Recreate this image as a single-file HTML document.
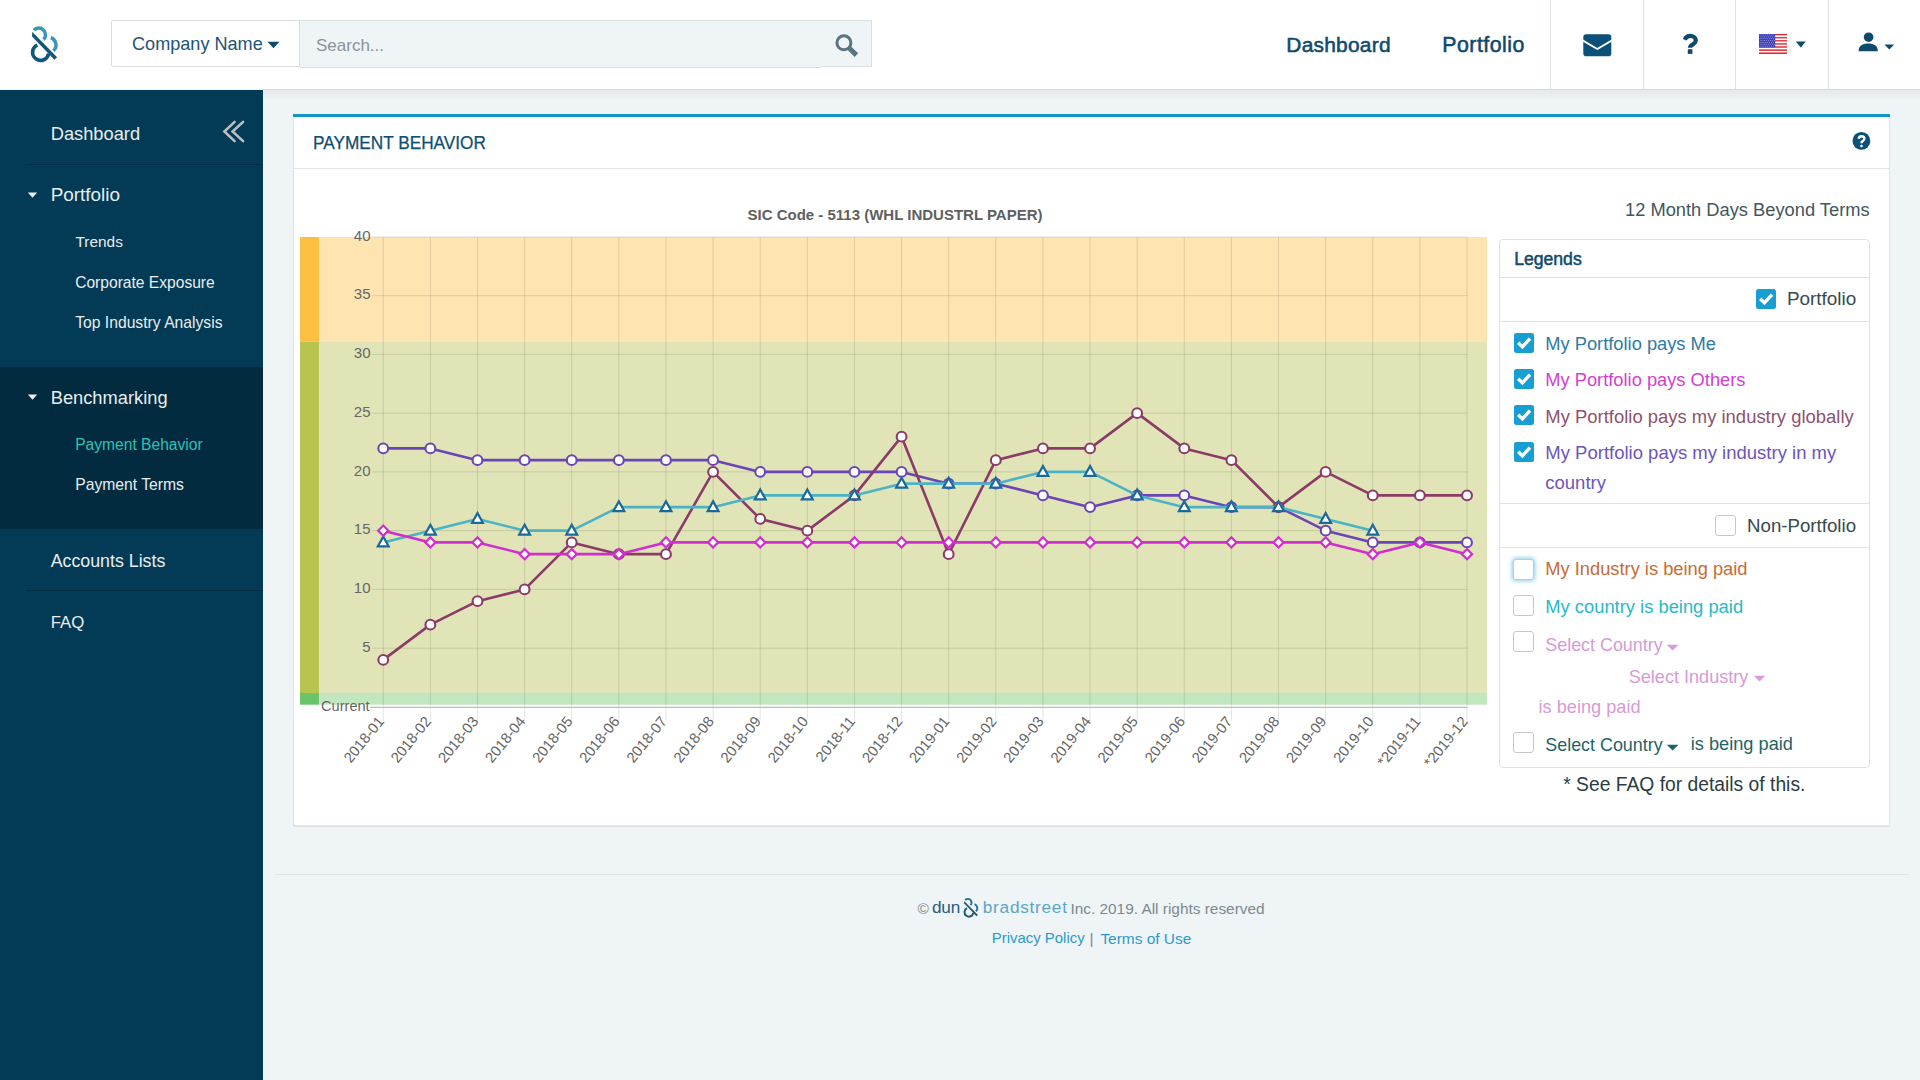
<!DOCTYPE html>
<html><head><meta charset="utf-8"><title>Payment Behavior</title>
<style>
html,body{margin:0;padding:0;width:1920px;height:1080px;overflow:hidden;background:#eff4f7}
body{position:relative;font-family:"Liberation Sans", sans-serif}
.t{position:absolute;line-height:1;white-space:nowrap}
svg text{font-family:"Liberation Sans", sans-serif}
</style></head><body>
<div style="position:absolute;left:0.00px;top:0.00px;width:1920.00px;height:1080.00px;background:#eff4f7"></div>
<div style="position:absolute;left:0.00px;top:0.00px;width:1920.00px;height:89.00px;background:#fff"></div>
<div style="position:absolute;left:263.00px;top:89.00px;width:1657.00px;height:1.00px;background:#d5dbdf"></div>
<div style="position:absolute;left:263.00px;top:90.00px;width:1657.00px;height:10.00px;background:linear-gradient(#e4e9ec,#eff4f7)"></div>
<svg style="position:absolute;left:0;top:0" width="80" height="80" viewBox="0 0 80 80">
<g transform="translate(25,20) scale(0.04444)">
<path d="M200 228 A148 148 0 1 1 418 440" fill="none" stroke="#3895bb" stroke-width="78"/>
<path d="M580 395 A175 175 0 0 1 640 690" fill="none" stroke="#3895bb" stroke-width="78"/>
<path d="M277 565 A180 180 0 1 0 530 752" fill="none" stroke="#0f577a" stroke-width="82"/>
<path d="M160 265 L722 838 L662 892 L160 372 Z" fill="#0f577a"/>
</g>
</svg>
<div style="position:absolute;left:111.00px;top:20.00px;width:189.00px;height:47.00px;background:#fff;border:1px solid #d9dde0;border-radius:2px 0 0 2px;box-sizing:border-box"></div>
<div class="t " style="left:132.00px;top:34.97px;font-size:18.10px;color:#1f5473;font-weight:400;">Company Name</div>
<svg style="position:absolute;left:267px;top:41px" width="14" height="8"><path d="M0.5 0.8 L12.5 0.8 L6.5 7.2 Z" fill="#0e4a6c"/></svg>
<div style="position:absolute;left:300.00px;top:20.00px;width:522.00px;height:48.00px;background:#eff4f7;border:1px solid #d9dfe3;border-left:none;border-right:none;box-sizing:border-box"></div>
<div style="position:absolute;left:822.00px;top:20.00px;width:50.00px;height:47.00px;background:#eff4f7;border:1px solid #d9dfe3;border-left:none;box-sizing:border-box"></div>
<div class="t " style="left:316.00px;top:36.91px;font-size:17.00px;color:#8b9399;font-weight:400;">Search...</div>
<svg style="position:absolute;left:830px;top:30px" width="32" height="32" viewBox="0 0 32 32">
<circle cx="13.9" cy="12.8" r="7.0" fill="none" stroke="#587580" stroke-width="3.0"/>
<path d="M18.9 17.8 L26.4 25.1" stroke="#587580" stroke-width="5"/>
</svg>
<div class="t " style="left:1286.30px;top:34.90px;font-size:20.90px;color:#0e4a6c;font-weight:400;letter-spacing:0.25px;-webkit-text-stroke:0.55px #0e4a6c">Dashboard</div>
<div class="t " style="left:1442.30px;top:34.57px;font-size:21.30px;color:#0e4a6c;font-weight:400;letter-spacing:0.5px;-webkit-text-stroke:0.55px #0e4a6c">Portfolio</div>
<div style="position:absolute;left:1550.00px;top:0.00px;width:1.00px;height:89.00px;background:#dde2e5"></div>
<div style="position:absolute;left:1643.00px;top:0.00px;width:1.00px;height:89.00px;background:#dde2e5"></div>
<div style="position:absolute;left:1735.00px;top:0.00px;width:1.00px;height:89.00px;background:#dde2e5"></div>
<div style="position:absolute;left:1828.00px;top:0.00px;width:1.00px;height:89.00px;background:#dde2e5"></div>
<svg style="position:absolute;left:1583px;top:34px" width="29" height="23" viewBox="0 0 29 23">
<rect x="0.3" y="0.2" width="28" height="22" rx="2.8" fill="#0b5079"/>
<path d="M-0.5 6.4 L14.3 15.0 L29.1 6.4" fill="none" stroke="#fff" stroke-width="2.0" stroke-linejoin="round"/>
</svg>
<svg style="position:absolute;left:0;top:0;overflow:visible" width="1" height="1">
<g transform="translate(1670,25) scale(0.037037)">
<path d="M398 398 C430 320 480 295 545 295 C630 295 695 345 695 415 C695 480 650 505 610 530 C560 560 540 580 540 612" fill="none" stroke="#0e4a6c" stroke-width="112"/>
<rect x="480" y="655" width="125" height="125" fill="#0e4a6c"/>
</g></svg>
<svg style="position:absolute;left:1759px;top:34px" width="28" height="20" viewBox="0 0 28 20"><rect x="0" y="0.000" width="28" height="1.538" fill="#e8202a"/><rect x="0" y="1.538" width="28" height="1.538" fill="#ffffff"/><rect x="0" y="3.077" width="28" height="1.538" fill="#e8202a"/><rect x="0" y="4.615" width="28" height="1.538" fill="#ffffff"/><rect x="0" y="6.154" width="28" height="1.538" fill="#e8202a"/><rect x="0" y="7.692" width="28" height="1.538" fill="#ffffff"/><rect x="0" y="9.231" width="28" height="1.538" fill="#e8202a"/><rect x="0" y="10.769" width="28" height="1.538" fill="#ffffff"/><rect x="0" y="12.308" width="28" height="1.538" fill="#e8202a"/><rect x="0" y="13.846" width="28" height="1.538" fill="#ffffff"/><rect x="0" y="15.385" width="28" height="1.538" fill="#e8202a"/><rect x="0" y="16.923" width="28" height="1.538" fill="#ffffff"/><rect x="0" y="18.462" width="28" height="1.538" fill="#e8202a"/><rect x="0" y="0" width="16.2" height="13.4" fill="#3c3cb4"/><rect x="0.6" y="0.6" width="0.9" height="0.9" fill="#a9a9e8"/><rect x="2.5" y="0.6" width="0.9" height="0.9" fill="#a9a9e8"/><rect x="4.4" y="0.6" width="0.9" height="0.9" fill="#a9a9e8"/><rect x="6.3" y="0.6" width="0.9" height="0.9" fill="#a9a9e8"/><rect x="8.2" y="0.6" width="0.9" height="0.9" fill="#a9a9e8"/><rect x="10.1" y="0.6" width="0.9" height="0.9" fill="#a9a9e8"/><rect x="12.0" y="0.6" width="0.9" height="0.9" fill="#a9a9e8"/><rect x="13.9" y="0.6" width="0.9" height="0.9" fill="#a9a9e8"/><rect x="1.5" y="2.5" width="0.9" height="0.9" fill="#a9a9e8"/><rect x="3.5" y="2.5" width="0.9" height="0.9" fill="#a9a9e8"/><rect x="5.3" y="2.5" width="0.9" height="0.9" fill="#a9a9e8"/><rect x="7.2" y="2.5" width="0.9" height="0.9" fill="#a9a9e8"/><rect x="9.1" y="2.5" width="0.9" height="0.9" fill="#a9a9e8"/><rect x="11.0" y="2.5" width="0.9" height="0.9" fill="#a9a9e8"/><rect x="12.9" y="2.5" width="0.9" height="0.9" fill="#a9a9e8"/><rect x="14.8" y="2.5" width="0.9" height="0.9" fill="#a9a9e8"/><rect x="0.6" y="4.3" width="0.9" height="0.9" fill="#a9a9e8"/><rect x="2.5" y="4.3" width="0.9" height="0.9" fill="#a9a9e8"/><rect x="4.4" y="4.3" width="0.9" height="0.9" fill="#a9a9e8"/><rect x="6.3" y="4.3" width="0.9" height="0.9" fill="#a9a9e8"/><rect x="8.2" y="4.3" width="0.9" height="0.9" fill="#a9a9e8"/><rect x="10.1" y="4.3" width="0.9" height="0.9" fill="#a9a9e8"/><rect x="12.0" y="4.3" width="0.9" height="0.9" fill="#a9a9e8"/><rect x="13.9" y="4.3" width="0.9" height="0.9" fill="#a9a9e8"/><rect x="1.5" y="6.2" width="0.9" height="0.9" fill="#a9a9e8"/><rect x="3.5" y="6.2" width="0.9" height="0.9" fill="#a9a9e8"/><rect x="5.3" y="6.2" width="0.9" height="0.9" fill="#a9a9e8"/><rect x="7.2" y="6.2" width="0.9" height="0.9" fill="#a9a9e8"/><rect x="9.1" y="6.2" width="0.9" height="0.9" fill="#a9a9e8"/><rect x="11.0" y="6.2" width="0.9" height="0.9" fill="#a9a9e8"/><rect x="12.9" y="6.2" width="0.9" height="0.9" fill="#a9a9e8"/><rect x="14.8" y="6.2" width="0.9" height="0.9" fill="#a9a9e8"/><rect x="0.6" y="8.0" width="0.9" height="0.9" fill="#a9a9e8"/><rect x="2.5" y="8.0" width="0.9" height="0.9" fill="#a9a9e8"/><rect x="4.4" y="8.0" width="0.9" height="0.9" fill="#a9a9e8"/><rect x="6.3" y="8.0" width="0.9" height="0.9" fill="#a9a9e8"/><rect x="8.2" y="8.0" width="0.9" height="0.9" fill="#a9a9e8"/><rect x="10.1" y="8.0" width="0.9" height="0.9" fill="#a9a9e8"/><rect x="12.0" y="8.0" width="0.9" height="0.9" fill="#a9a9e8"/><rect x="13.9" y="8.0" width="0.9" height="0.9" fill="#a9a9e8"/><rect x="1.5" y="9.8" width="0.9" height="0.9" fill="#a9a9e8"/><rect x="3.5" y="9.8" width="0.9" height="0.9" fill="#a9a9e8"/><rect x="5.3" y="9.8" width="0.9" height="0.9" fill="#a9a9e8"/><rect x="7.2" y="9.8" width="0.9" height="0.9" fill="#a9a9e8"/><rect x="9.1" y="9.8" width="0.9" height="0.9" fill="#a9a9e8"/><rect x="11.0" y="9.8" width="0.9" height="0.9" fill="#a9a9e8"/><rect x="12.9" y="9.8" width="0.9" height="0.9" fill="#a9a9e8"/><rect x="14.8" y="9.8" width="0.9" height="0.9" fill="#a9a9e8"/><rect x="0.6" y="11.7" width="0.9" height="0.9" fill="#a9a9e8"/><rect x="2.5" y="11.7" width="0.9" height="0.9" fill="#a9a9e8"/><rect x="4.4" y="11.7" width="0.9" height="0.9" fill="#a9a9e8"/><rect x="6.3" y="11.7" width="0.9" height="0.9" fill="#a9a9e8"/><rect x="8.2" y="11.7" width="0.9" height="0.9" fill="#a9a9e8"/><rect x="10.1" y="11.7" width="0.9" height="0.9" fill="#a9a9e8"/><rect x="12.0" y="11.7" width="0.9" height="0.9" fill="#a9a9e8"/><rect x="13.9" y="11.7" width="0.9" height="0.9" fill="#a9a9e8"/></svg>
<svg style="position:absolute;left:1795px;top:41px" width="12" height="7"><path d="M0.8 0.6 L10.8 0.6 L5.8 6.4 Z" fill="#0e4a6c"/></svg>
<svg style="position:absolute;left:1857px;top:31px" width="40" height="22" viewBox="0 0 40 22">
<circle cx="11.6" cy="6.2" r="4.8" fill="#0e4a6c"/>
<path d="M1.6 20.2 C1.6 14.2 5.6 12.4 11.2 12.4 C16.8 12.4 20.8 14.2 20.8 20.2 Z" fill="#0e4a6c"/>
<path d="M27.4 13.4 L37.2 13.4 L32.3 18.4 Z" fill="#0e4a6c"/>
</svg>
<div style="position:absolute;left:0.00px;top:90.00px;width:263.00px;height:990.00px;background:#033a55"></div>
<div style="position:absolute;left:0.00px;top:367.00px;width:263.00px;height:162.00px;background:#022b40"></div>
<div class="t " style="left:50.70px;top:124.51px;font-size:18.30px;color:#e8eef1;font-weight:400;">Dashboard</div>
<svg style="position:absolute;left:220px;top:118px" width="28" height="28" viewBox="0 0 28 28">
<path d="M14.6 3.9 L4.4 13.5 L14.6 23.1" fill="none" stroke="#b9bfc3" stroke-width="2.6" stroke-linecap="round"/>
<path d="M23.1 3.9 L12.6 13.5 L23.1 23.1" fill="none" stroke="#b9bfc3" stroke-width="2.6" stroke-linecap="round"/>
</svg>
<div style="position:absolute;left:25.00px;top:164.00px;width:238.00px;height:1.00px;background:#022c42"></div>
<svg style="position:absolute;left:27px;top:192px" width="12" height="7"><path d="M0.8 0.5 L10.2 0.5 L5.5 5.8 Z" fill="#e8eef1"/></svg>
<div class="t " style="left:50.70px;top:185.80px;font-size:18.90px;color:#e8eef1;font-weight:400;">Portfolio</div>
<div class="t " style="left:75.50px;top:233.66px;font-size:15.40px;color:#e8eef1;font-weight:400;">Trends</div>
<div class="t " style="left:75.20px;top:274.89px;font-size:15.60px;color:#e8eef1;font-weight:400;">Corporate Exposure</div>
<div class="t " style="left:75.20px;top:315.21px;font-size:15.70px;color:#e8eef1;font-weight:400;">Top Industry Analysis</div>
<svg style="position:absolute;left:27px;top:394px" width="12" height="7"><path d="M0.8 0.5 L10.2 0.5 L5.5 5.8 Z" fill="#e8eef1"/></svg>
<div class="t " style="left:50.70px;top:389.31px;font-size:18.30px;color:#e8eef1;font-weight:400;">Benchmarking</div>
<div class="t " style="left:75.20px;top:436.79px;font-size:15.60px;color:#2fc0b2;font-weight:400;">Payment Behavior</div>
<div class="t " style="left:75.20px;top:476.71px;font-size:15.70px;color:#e8eef1;font-weight:400;">Payment Terms</div>
<div class="t " style="left:50.70px;top:553.13px;font-size:17.80px;color:#e8eef1;font-weight:400;">Accounts Lists</div>
<div style="position:absolute;left:26.00px;top:590.00px;width:237.00px;height:1.00px;background:#022c42"></div>
<div class="t " style="left:50.70px;top:615.18px;font-size:16.80px;color:#e8eef1;font-weight:400;">FAQ</div>
<div style="position:absolute;left:293.00px;top:114.00px;width:1597.00px;height:712.00px;background:#fff;border:1px solid #dfe5e8;box-sizing:border-box;box-shadow:0 1px 1px rgba(0,0,0,0.06)"></div>
<div style="position:absolute;left:293.00px;top:114.00px;width:1597.00px;height:3.00px;background:#1196c7"></div>
<div style="position:absolute;left:294.00px;top:168.00px;width:1595.00px;height:1.00px;background:#e1e6e9"></div>
<div class="t " style="left:313.30px;top:133.67px;font-size:18.10px;color:#0f4e6f;font-weight:400;transform:scaleX(0.952);transform-origin:0 0;-webkit-text-stroke:0.25px #0f4e6f">PAYMENT BEHAVIOR</div>
<svg style="position:absolute;left:1851px;top:131px" width="20" height="20" viewBox="0 0 20 20">
<circle cx="10.4" cy="9.9" r="8.9" fill="#0b5079"/>
</svg>
<svg style="position:absolute;left:0;top:0;overflow:visible" width="1" height="1">
<g transform="translate(1845,125) scale(0.0324)">
<path d="M418 425 C432 372 467 348 508 348 C565 348 598 380 598 422 C598 462 570 480 542 497 C516 512 508 528 508 562" fill="none" stroke="#fff" stroke-width="74"/>
<circle cx="508" cy="648" r="42" fill="#fff"/>
</g></svg>
<div class="t " style="right:50.40px;top:201.11px;font-size:18.30px;color:#43565c;font-weight:400;">12 Month Days Beyond Terms</div>
<svg style="position:absolute;left:0;top:0" width="1920" height="1080" viewBox="0 0 1920 1080">
<rect x="300" y="237" width="19" height="104.75" fill="#fdbf42"/>
<rect x="319" y="237" width="1168" height="104.75" fill="#fde4b0"/>
<rect x="300" y="341.75" width="19" height="351.25" fill="#b9c450"/>
<rect x="319" y="341.75" width="1168" height="351.25" fill="#e0e4b6"/>
<rect x="300" y="693" width="19" height="11.7" fill="#6cc46a"/>
<rect x="319" y="693" width="1168" height="11.7" fill="#c2e6c0"/>
<path d="M372 648.15 H1467.5" stroke="rgba(0,0,0,0.11)" stroke-width="1"/>
<path d="M372 589.40 H1467.5" stroke="rgba(0,0,0,0.11)" stroke-width="1"/>
<path d="M372 530.65 H1467.5" stroke="rgba(0,0,0,0.11)" stroke-width="1"/>
<path d="M372 471.90 H1467.5" stroke="rgba(0,0,0,0.11)" stroke-width="1"/>
<path d="M372 413.15 H1467.5" stroke="rgba(0,0,0,0.11)" stroke-width="1"/>
<path d="M372 354.40 H1467.5" stroke="rgba(0,0,0,0.11)" stroke-width="1"/>
<path d="M372 295.65 H1467.5" stroke="rgba(0,0,0,0.11)" stroke-width="1"/>
<path d="M372 236.90 H1467.5" stroke="rgba(0,0,0,0.11)" stroke-width="1"/>
<path d="M383.25 237 V720.5" stroke="rgba(0,0,0,0.11)" stroke-width="1"/>
<path d="M430.37 237 V720.5" stroke="rgba(0,0,0,0.11)" stroke-width="1"/>
<path d="M477.49 237 V720.5" stroke="rgba(0,0,0,0.11)" stroke-width="1"/>
<path d="M524.61 237 V720.5" stroke="rgba(0,0,0,0.11)" stroke-width="1"/>
<path d="M571.73 237 V720.5" stroke="rgba(0,0,0,0.11)" stroke-width="1"/>
<path d="M618.85 237 V720.5" stroke="rgba(0,0,0,0.11)" stroke-width="1"/>
<path d="M665.97 237 V720.5" stroke="rgba(0,0,0,0.11)" stroke-width="1"/>
<path d="M713.09 237 V720.5" stroke="rgba(0,0,0,0.11)" stroke-width="1"/>
<path d="M760.21 237 V720.5" stroke="rgba(0,0,0,0.11)" stroke-width="1"/>
<path d="M807.33 237 V720.5" stroke="rgba(0,0,0,0.11)" stroke-width="1"/>
<path d="M854.45 237 V720.5" stroke="rgba(0,0,0,0.11)" stroke-width="1"/>
<path d="M901.57 237 V720.5" stroke="rgba(0,0,0,0.11)" stroke-width="1"/>
<path d="M948.69 237 V720.5" stroke="rgba(0,0,0,0.11)" stroke-width="1"/>
<path d="M995.81 237 V720.5" stroke="rgba(0,0,0,0.11)" stroke-width="1"/>
<path d="M1042.93 237 V720.5" stroke="rgba(0,0,0,0.11)" stroke-width="1"/>
<path d="M1090.05 237 V720.5" stroke="rgba(0,0,0,0.11)" stroke-width="1"/>
<path d="M1137.17 237 V720.5" stroke="rgba(0,0,0,0.11)" stroke-width="1"/>
<path d="M1184.29 237 V720.5" stroke="rgba(0,0,0,0.11)" stroke-width="1"/>
<path d="M1231.41 237 V720.5" stroke="rgba(0,0,0,0.11)" stroke-width="1"/>
<path d="M1278.53 237 V720.5" stroke="rgba(0,0,0,0.11)" stroke-width="1"/>
<path d="M1325.65 237 V720.5" stroke="rgba(0,0,0,0.11)" stroke-width="1"/>
<path d="M1372.77 237 V720.5" stroke="rgba(0,0,0,0.11)" stroke-width="1"/>
<path d="M1419.89 237 V720.5" stroke="rgba(0,0,0,0.11)" stroke-width="1"/>
<path d="M1467.01 237 V720.5" stroke="rgba(0,0,0,0.11)" stroke-width="1"/>
<path d="M370 707.4 H1467.5" stroke="#bbbbbb" stroke-width="1.2"/>
<text x="370.5" y="651.95" text-anchor="end" font-size="15" fill="#666">5</text>
<text x="370.5" y="593.20" text-anchor="end" font-size="15" fill="#666">10</text>
<text x="370.5" y="534.45" text-anchor="end" font-size="15" fill="#666">15</text>
<text x="370.5" y="475.70" text-anchor="end" font-size="15" fill="#666">20</text>
<text x="370.5" y="416.95" text-anchor="end" font-size="15" fill="#666">25</text>
<text x="370.5" y="358.20" text-anchor="end" font-size="15" fill="#666">30</text>
<text x="370.5" y="299.45" text-anchor="end" font-size="15" fill="#666">35</text>
<text x="370.5" y="240.70" text-anchor="end" font-size="15" fill="#666">40</text>
<text x="321" y="711.2" font-size="14.6" fill="#666">Current</text>
<text x="384.85" y="721.60" text-anchor="end" font-size="14.8" fill="#666" transform="rotate(-51 384.85 721.60)">2018-01</text>
<text x="431.97" y="721.60" text-anchor="end" font-size="14.8" fill="#666" transform="rotate(-51 431.97 721.60)">2018-02</text>
<text x="479.09" y="721.60" text-anchor="end" font-size="14.8" fill="#666" transform="rotate(-51 479.09 721.60)">2018-03</text>
<text x="526.21" y="721.60" text-anchor="end" font-size="14.8" fill="#666" transform="rotate(-51 526.21 721.60)">2018-04</text>
<text x="573.33" y="721.60" text-anchor="end" font-size="14.8" fill="#666" transform="rotate(-51 573.33 721.60)">2018-05</text>
<text x="620.45" y="721.60" text-anchor="end" font-size="14.8" fill="#666" transform="rotate(-51 620.45 721.60)">2018-06</text>
<text x="667.57" y="721.60" text-anchor="end" font-size="14.8" fill="#666" transform="rotate(-51 667.57 721.60)">2018-07</text>
<text x="714.69" y="721.60" text-anchor="end" font-size="14.8" fill="#666" transform="rotate(-51 714.69 721.60)">2018-08</text>
<text x="761.81" y="721.60" text-anchor="end" font-size="14.8" fill="#666" transform="rotate(-51 761.81 721.60)">2018-09</text>
<text x="808.93" y="721.60" text-anchor="end" font-size="14.8" fill="#666" transform="rotate(-51 808.93 721.60)">2018-10</text>
<text x="856.05" y="721.60" text-anchor="end" font-size="14.8" fill="#666" transform="rotate(-51 856.05 721.60)">2018-11</text>
<text x="903.17" y="721.60" text-anchor="end" font-size="14.8" fill="#666" transform="rotate(-51 903.17 721.60)">2018-12</text>
<text x="950.29" y="721.60" text-anchor="end" font-size="14.8" fill="#666" transform="rotate(-51 950.29 721.60)">2019-01</text>
<text x="997.41" y="721.60" text-anchor="end" font-size="14.8" fill="#666" transform="rotate(-51 997.41 721.60)">2019-02</text>
<text x="1044.53" y="721.60" text-anchor="end" font-size="14.8" fill="#666" transform="rotate(-51 1044.53 721.60)">2019-03</text>
<text x="1091.65" y="721.60" text-anchor="end" font-size="14.8" fill="#666" transform="rotate(-51 1091.65 721.60)">2019-04</text>
<text x="1138.77" y="721.60" text-anchor="end" font-size="14.8" fill="#666" transform="rotate(-51 1138.77 721.60)">2019-05</text>
<text x="1185.89" y="721.60" text-anchor="end" font-size="14.8" fill="#666" transform="rotate(-51 1185.89 721.60)">2019-06</text>
<text x="1233.01" y="721.60" text-anchor="end" font-size="14.8" fill="#666" transform="rotate(-51 1233.01 721.60)">2019-07</text>
<text x="1280.13" y="721.60" text-anchor="end" font-size="14.8" fill="#666" transform="rotate(-51 1280.13 721.60)">2019-08</text>
<text x="1327.25" y="721.60" text-anchor="end" font-size="14.8" fill="#666" transform="rotate(-51 1327.25 721.60)">2019-09</text>
<text x="1374.37" y="721.60" text-anchor="end" font-size="14.8" fill="#666" transform="rotate(-51 1374.37 721.60)">2019-10</text>
<text x="1421.49" y="721.60" text-anchor="end" font-size="14.8" fill="#666" transform="rotate(-51 1421.49 721.60)">*2019-11</text>
<text x="1468.61" y="721.60" text-anchor="end" font-size="14.8" fill="#666" transform="rotate(-51 1468.61 721.60)">*2019-12</text>
<text x="895" y="220" text-anchor="middle" font-size="15" font-weight="bold" fill="#606060">SIC Code - 5113 (WHL INDUSTRL PAPER)</text>
<polyline points="383.25,448.40 430.37,448.40 477.49,460.15 524.61,460.15 571.73,460.15 618.85,460.15 665.97,460.15 713.09,460.15 760.21,471.90 807.33,471.90 854.45,471.90 901.57,471.90 948.69,483.65 995.81,483.65 1042.93,495.40 1090.05,507.15 1137.17,495.40 1184.29,495.40 1231.41,507.15 1278.53,507.15 1325.65,530.65 1372.77,542.40 1419.89,542.40 1467.01,542.40" fill="none" stroke="#6b45b6" stroke-width="2.6" stroke-linejoin="round"/>
<circle cx="383.25" cy="448.40" r="4.9" fill="#fff" stroke="#6b45b6" stroke-width="2.1"/>
<circle cx="430.37" cy="448.40" r="4.9" fill="#fff" stroke="#6b45b6" stroke-width="2.1"/>
<circle cx="477.49" cy="460.15" r="4.9" fill="#fff" stroke="#6b45b6" stroke-width="2.1"/>
<circle cx="524.61" cy="460.15" r="4.9" fill="#fff" stroke="#6b45b6" stroke-width="2.1"/>
<circle cx="571.73" cy="460.15" r="4.9" fill="#fff" stroke="#6b45b6" stroke-width="2.1"/>
<circle cx="618.85" cy="460.15" r="4.9" fill="#fff" stroke="#6b45b6" stroke-width="2.1"/>
<circle cx="665.97" cy="460.15" r="4.9" fill="#fff" stroke="#6b45b6" stroke-width="2.1"/>
<circle cx="713.09" cy="460.15" r="4.9" fill="#fff" stroke="#6b45b6" stroke-width="2.1"/>
<circle cx="760.21" cy="471.90" r="4.9" fill="#fff" stroke="#6b45b6" stroke-width="2.1"/>
<circle cx="807.33" cy="471.90" r="4.9" fill="#fff" stroke="#6b45b6" stroke-width="2.1"/>
<circle cx="854.45" cy="471.90" r="4.9" fill="#fff" stroke="#6b45b6" stroke-width="2.1"/>
<circle cx="901.57" cy="471.90" r="4.9" fill="#fff" stroke="#6b45b6" stroke-width="2.1"/>
<circle cx="948.69" cy="483.65" r="4.9" fill="#fff" stroke="#6b45b6" stroke-width="2.1"/>
<circle cx="995.81" cy="483.65" r="4.9" fill="#fff" stroke="#6b45b6" stroke-width="2.1"/>
<circle cx="1042.93" cy="495.40" r="4.9" fill="#fff" stroke="#6b45b6" stroke-width="2.1"/>
<circle cx="1090.05" cy="507.15" r="4.9" fill="#fff" stroke="#6b45b6" stroke-width="2.1"/>
<circle cx="1137.17" cy="495.40" r="4.9" fill="#fff" stroke="#6b45b6" stroke-width="2.1"/>
<circle cx="1184.29" cy="495.40" r="4.9" fill="#fff" stroke="#6b45b6" stroke-width="2.1"/>
<circle cx="1231.41" cy="507.15" r="4.9" fill="#fff" stroke="#6b45b6" stroke-width="2.1"/>
<circle cx="1278.53" cy="507.15" r="4.9" fill="#fff" stroke="#6b45b6" stroke-width="2.1"/>
<circle cx="1325.65" cy="530.65" r="4.9" fill="#fff" stroke="#6b45b6" stroke-width="2.1"/>
<circle cx="1372.77" cy="542.40" r="4.9" fill="#fff" stroke="#6b45b6" stroke-width="2.1"/>
<circle cx="1419.89" cy="542.40" r="4.9" fill="#fff" stroke="#6b45b6" stroke-width="2.1"/>
<circle cx="1467.01" cy="542.40" r="4.9" fill="#fff" stroke="#6b45b6" stroke-width="2.1"/>
<polyline points="383.25,659.90 430.37,624.65 477.49,601.15 524.61,589.40 571.73,542.40 618.85,554.15 665.97,554.15 713.09,471.90 760.21,518.90 807.33,530.65 854.45,495.40 901.57,436.65 948.69,554.15 995.81,460.15 1042.93,448.40 1090.05,448.40 1137.17,413.15 1184.29,448.40 1231.41,460.15 1278.53,507.15 1325.65,471.90 1372.77,495.40 1419.89,495.40 1467.01,495.40" fill="none" stroke="#8a3b68" stroke-width="2.6" stroke-linejoin="round"/>
<circle cx="383.25" cy="659.90" r="4.9" fill="#fff" stroke="#8a3b68" stroke-width="2.1"/>
<circle cx="430.37" cy="624.65" r="4.9" fill="#fff" stroke="#8a3b68" stroke-width="2.1"/>
<circle cx="477.49" cy="601.15" r="4.9" fill="#fff" stroke="#8a3b68" stroke-width="2.1"/>
<circle cx="524.61" cy="589.40" r="4.9" fill="#fff" stroke="#8a3b68" stroke-width="2.1"/>
<circle cx="571.73" cy="542.40" r="4.9" fill="#fff" stroke="#8a3b68" stroke-width="2.1"/>
<circle cx="618.85" cy="554.15" r="4.9" fill="#fff" stroke="#8a3b68" stroke-width="2.1"/>
<circle cx="665.97" cy="554.15" r="4.9" fill="#fff" stroke="#8a3b68" stroke-width="2.1"/>
<circle cx="713.09" cy="471.90" r="4.9" fill="#fff" stroke="#8a3b68" stroke-width="2.1"/>
<circle cx="760.21" cy="518.90" r="4.9" fill="#fff" stroke="#8a3b68" stroke-width="2.1"/>
<circle cx="807.33" cy="530.65" r="4.9" fill="#fff" stroke="#8a3b68" stroke-width="2.1"/>
<circle cx="854.45" cy="495.40" r="4.9" fill="#fff" stroke="#8a3b68" stroke-width="2.1"/>
<circle cx="901.57" cy="436.65" r="4.9" fill="#fff" stroke="#8a3b68" stroke-width="2.1"/>
<circle cx="948.69" cy="554.15" r="4.9" fill="#fff" stroke="#8a3b68" stroke-width="2.1"/>
<circle cx="995.81" cy="460.15" r="4.9" fill="#fff" stroke="#8a3b68" stroke-width="2.1"/>
<circle cx="1042.93" cy="448.40" r="4.9" fill="#fff" stroke="#8a3b68" stroke-width="2.1"/>
<circle cx="1090.05" cy="448.40" r="4.9" fill="#fff" stroke="#8a3b68" stroke-width="2.1"/>
<circle cx="1137.17" cy="413.15" r="4.9" fill="#fff" stroke="#8a3b68" stroke-width="2.1"/>
<circle cx="1184.29" cy="448.40" r="4.9" fill="#fff" stroke="#8a3b68" stroke-width="2.1"/>
<circle cx="1231.41" cy="460.15" r="4.9" fill="#fff" stroke="#8a3b68" stroke-width="2.1"/>
<circle cx="1278.53" cy="507.15" r="4.9" fill="#fff" stroke="#8a3b68" stroke-width="2.1"/>
<circle cx="1325.65" cy="471.90" r="4.9" fill="#fff" stroke="#8a3b68" stroke-width="2.1"/>
<circle cx="1372.77" cy="495.40" r="4.9" fill="#fff" stroke="#8a3b68" stroke-width="2.1"/>
<circle cx="1419.89" cy="495.40" r="4.9" fill="#fff" stroke="#8a3b68" stroke-width="2.1"/>
<circle cx="1467.01" cy="495.40" r="4.9" fill="#fff" stroke="#8a3b68" stroke-width="2.1"/>
<polyline points="383.25,542.40 430.37,530.65 477.49,518.90 524.61,530.65 571.73,530.65 618.85,507.15 665.97,507.15 713.09,507.15 760.21,495.40 807.33,495.40 854.45,495.40 901.57,483.65 948.69,483.65 995.81,483.65 1042.93,471.90 1090.05,471.90 1137.17,495.40 1184.29,507.15 1231.41,507.15 1278.53,507.15 1325.65,518.90 1372.77,530.65" fill="none" stroke="#4cb2c6" stroke-width="2.6" stroke-linejoin="round"/>
<path d="M383.25 536.60 L388.65 546.30 L377.85 546.30 Z" fill="#fff" stroke="#19699a" stroke-width="2.2" stroke-linejoin="miter"/>
<path d="M430.37 524.85 L435.77 534.55 L424.97 534.55 Z" fill="#fff" stroke="#19699a" stroke-width="2.2" stroke-linejoin="miter"/>
<path d="M477.49 513.10 L482.89 522.80 L472.09 522.80 Z" fill="#fff" stroke="#19699a" stroke-width="2.2" stroke-linejoin="miter"/>
<path d="M524.61 524.85 L530.01 534.55 L519.21 534.55 Z" fill="#fff" stroke="#19699a" stroke-width="2.2" stroke-linejoin="miter"/>
<path d="M571.73 524.85 L577.13 534.55 L566.33 534.55 Z" fill="#fff" stroke="#19699a" stroke-width="2.2" stroke-linejoin="miter"/>
<path d="M618.85 501.35 L624.25 511.05 L613.45 511.05 Z" fill="#fff" stroke="#19699a" stroke-width="2.2" stroke-linejoin="miter"/>
<path d="M665.97 501.35 L671.37 511.05 L660.57 511.05 Z" fill="#fff" stroke="#19699a" stroke-width="2.2" stroke-linejoin="miter"/>
<path d="M713.09 501.35 L718.49 511.05 L707.69 511.05 Z" fill="#fff" stroke="#19699a" stroke-width="2.2" stroke-linejoin="miter"/>
<path d="M760.21 489.60 L765.61 499.30 L754.81 499.30 Z" fill="#fff" stroke="#19699a" stroke-width="2.2" stroke-linejoin="miter"/>
<path d="M807.33 489.60 L812.73 499.30 L801.93 499.30 Z" fill="#fff" stroke="#19699a" stroke-width="2.2" stroke-linejoin="miter"/>
<path d="M854.45 489.60 L859.85 499.30 L849.05 499.30 Z" fill="#fff" stroke="#19699a" stroke-width="2.2" stroke-linejoin="miter"/>
<path d="M901.57 477.85 L906.97 487.55 L896.17 487.55 Z" fill="#fff" stroke="#19699a" stroke-width="2.2" stroke-linejoin="miter"/>
<path d="M948.69 477.85 L954.09 487.55 L943.29 487.55 Z" fill="#fff" stroke="#19699a" stroke-width="2.2" stroke-linejoin="miter"/>
<path d="M995.81 477.85 L1001.21 487.55 L990.41 487.55 Z" fill="#fff" stroke="#19699a" stroke-width="2.2" stroke-linejoin="miter"/>
<path d="M1042.93 466.10 L1048.33 475.80 L1037.53 475.80 Z" fill="#fff" stroke="#19699a" stroke-width="2.2" stroke-linejoin="miter"/>
<path d="M1090.05 466.10 L1095.45 475.80 L1084.65 475.80 Z" fill="#fff" stroke="#19699a" stroke-width="2.2" stroke-linejoin="miter"/>
<path d="M1137.17 489.60 L1142.57 499.30 L1131.77 499.30 Z" fill="#fff" stroke="#19699a" stroke-width="2.2" stroke-linejoin="miter"/>
<path d="M1184.29 501.35 L1189.69 511.05 L1178.89 511.05 Z" fill="#fff" stroke="#19699a" stroke-width="2.2" stroke-linejoin="miter"/>
<path d="M1231.41 501.35 L1236.81 511.05 L1226.01 511.05 Z" fill="#fff" stroke="#19699a" stroke-width="2.2" stroke-linejoin="miter"/>
<path d="M1278.53 501.35 L1283.93 511.05 L1273.13 511.05 Z" fill="#fff" stroke="#19699a" stroke-width="2.2" stroke-linejoin="miter"/>
<path d="M1325.65 513.10 L1331.05 522.80 L1320.25 522.80 Z" fill="#fff" stroke="#19699a" stroke-width="2.2" stroke-linejoin="miter"/>
<path d="M1372.77 524.85 L1378.17 534.55 L1367.37 534.55 Z" fill="#fff" stroke="#19699a" stroke-width="2.2" stroke-linejoin="miter"/>
<polyline points="383.25,530.65 430.37,542.40 477.49,542.40 524.61,554.15 571.73,554.15 618.85,554.15 665.97,542.40 713.09,542.40 760.21,542.40 807.33,542.40 854.45,542.40 901.57,542.40 948.69,542.40 995.81,542.40 1042.93,542.40 1090.05,542.40 1137.17,542.40 1184.29,542.40 1231.41,542.40 1278.53,542.40 1325.65,542.40 1372.77,554.15 1419.89,542.40 1467.01,554.15" fill="none" stroke="#d22dce" stroke-width="2.6" stroke-linejoin="round"/>
<path d="M383.25 525.55 L388.35 530.65 L383.25 535.75 L378.15 530.65 Z" fill="#fff" stroke="#d22dce" stroke-width="2.2"/>
<path d="M430.37 537.30 L435.47 542.40 L430.37 547.50 L425.27 542.40 Z" fill="#fff" stroke="#d22dce" stroke-width="2.2"/>
<path d="M477.49 537.30 L482.59 542.40 L477.49 547.50 L472.39 542.40 Z" fill="#fff" stroke="#d22dce" stroke-width="2.2"/>
<path d="M524.61 549.05 L529.71 554.15 L524.61 559.25 L519.51 554.15 Z" fill="#fff" stroke="#d22dce" stroke-width="2.2"/>
<path d="M571.73 549.05 L576.83 554.15 L571.73 559.25 L566.63 554.15 Z" fill="#fff" stroke="#d22dce" stroke-width="2.2"/>
<path d="M618.85 549.05 L623.95 554.15 L618.85 559.25 L613.75 554.15 Z" fill="#fff" stroke="#d22dce" stroke-width="2.2"/>
<path d="M665.97 537.30 L671.07 542.40 L665.97 547.50 L660.87 542.40 Z" fill="#fff" stroke="#d22dce" stroke-width="2.2"/>
<path d="M713.09 537.30 L718.19 542.40 L713.09 547.50 L707.99 542.40 Z" fill="#fff" stroke="#d22dce" stroke-width="2.2"/>
<path d="M760.21 537.30 L765.31 542.40 L760.21 547.50 L755.11 542.40 Z" fill="#fff" stroke="#d22dce" stroke-width="2.2"/>
<path d="M807.33 537.30 L812.43 542.40 L807.33 547.50 L802.23 542.40 Z" fill="#fff" stroke="#d22dce" stroke-width="2.2"/>
<path d="M854.45 537.30 L859.55 542.40 L854.45 547.50 L849.35 542.40 Z" fill="#fff" stroke="#d22dce" stroke-width="2.2"/>
<path d="M901.57 537.30 L906.67 542.40 L901.57 547.50 L896.47 542.40 Z" fill="#fff" stroke="#d22dce" stroke-width="2.2"/>
<path d="M948.69 537.30 L953.79 542.40 L948.69 547.50 L943.59 542.40 Z" fill="#fff" stroke="#d22dce" stroke-width="2.2"/>
<path d="M995.81 537.30 L1000.91 542.40 L995.81 547.50 L990.71 542.40 Z" fill="#fff" stroke="#d22dce" stroke-width="2.2"/>
<path d="M1042.93 537.30 L1048.03 542.40 L1042.93 547.50 L1037.83 542.40 Z" fill="#fff" stroke="#d22dce" stroke-width="2.2"/>
<path d="M1090.05 537.30 L1095.15 542.40 L1090.05 547.50 L1084.95 542.40 Z" fill="#fff" stroke="#d22dce" stroke-width="2.2"/>
<path d="M1137.17 537.30 L1142.27 542.40 L1137.17 547.50 L1132.07 542.40 Z" fill="#fff" stroke="#d22dce" stroke-width="2.2"/>
<path d="M1184.29 537.30 L1189.39 542.40 L1184.29 547.50 L1179.19 542.40 Z" fill="#fff" stroke="#d22dce" stroke-width="2.2"/>
<path d="M1231.41 537.30 L1236.51 542.40 L1231.41 547.50 L1226.31 542.40 Z" fill="#fff" stroke="#d22dce" stroke-width="2.2"/>
<path d="M1278.53 537.30 L1283.63 542.40 L1278.53 547.50 L1273.43 542.40 Z" fill="#fff" stroke="#d22dce" stroke-width="2.2"/>
<path d="M1325.65 537.30 L1330.75 542.40 L1325.65 547.50 L1320.55 542.40 Z" fill="#fff" stroke="#d22dce" stroke-width="2.2"/>
<path d="M1372.77 549.05 L1377.87 554.15 L1372.77 559.25 L1367.67 554.15 Z" fill="#fff" stroke="#d22dce" stroke-width="2.2"/>
<path d="M1419.89 537.30 L1424.99 542.40 L1419.89 547.50 L1414.79 542.40 Z" fill="#fff" stroke="#d22dce" stroke-width="2.2"/>
<path d="M1467.01 549.05 L1472.11 554.15 L1467.01 559.25 L1461.91 554.15 Z" fill="#fff" stroke="#d22dce" stroke-width="2.2"/>
</svg>
<div style="position:absolute;left:1499.00px;top:239.00px;width:371.00px;height:529.00px;border:1px solid #dfe3e6;border-radius:4px;box-sizing:border-box;background:#fff"></div>
<div class="t " style="left:1514.20px;top:250.50px;font-size:17.60px;color:#0e4a6c;font-weight:400;-webkit-text-stroke:0.5px #0e4a6c">Legends</div>
<div style="position:absolute;left:1500.00px;top:277.00px;width:369.00px;height:1.00px;background:#dfe3e6"></div>
<div style="position:absolute;left:1500.00px;top:321.00px;width:369.00px;height:1.00px;background:#dfe3e6"></div>
<div style="position:absolute;left:1500.00px;top:503.00px;width:369.00px;height:1.00px;background:#dfe3e6"></div>
<div style="position:absolute;left:1500.00px;top:547.00px;width:369.00px;height:1.00px;background:#dfe3e6"></div>
<svg style="position:absolute;left:1755.6px;top:288.6px" width="20" height="20" viewBox="0 0 20 20">
<rect x="0" y="0" width="20" height="20" rx="2.5" fill="#179ed3"/>
<path d="M4.2 9.8 L8.4 13.8 L16 5.6" fill="none" stroke="#fff" stroke-width="3.4"/>
</svg>
<div class="t " style="left:1786.90px;top:289.80px;font-size:18.90px;color:#374a50;font-weight:400;">Portfolio</div>
<svg style="position:absolute;left:1513.5px;top:332.7px" width="20" height="20" viewBox="0 0 20 20">
<rect x="0" y="0" width="20" height="20" rx="2.5" fill="#179ed3"/>
<path d="M4.2 9.8 L8.4 13.8 L16 5.6" fill="none" stroke="#fff" stroke-width="3.4"/>
</svg>
<div class="t " style="left:1545.30px;top:334.51px;font-size:18.30px;color:#2f7aa3;font-weight:400;">My Portfolio pays Me</div>
<svg style="position:absolute;left:1513.5px;top:369.0px" width="20" height="20" viewBox="0 0 20 20">
<rect x="0" y="0" width="20" height="20" rx="2.5" fill="#179ed3"/>
<path d="M4.2 9.8 L8.4 13.8 L16 5.6" fill="none" stroke="#fff" stroke-width="3.4"/>
</svg>
<div class="t " style="left:1545.30px;top:371.11px;font-size:18.30px;color:#d23fcf;font-weight:400;">My Portfolio pays Others</div>
<svg style="position:absolute;left:1513.5px;top:405.0px" width="20" height="20" viewBox="0 0 20 20">
<rect x="0" y="0" width="20" height="20" rx="2.5" fill="#179ed3"/>
<path d="M4.2 9.8 L8.4 13.8 L16 5.6" fill="none" stroke="#fff" stroke-width="3.4"/>
</svg>
<div class="t " style="left:1545.30px;top:407.88px;font-size:18.45px;color:#8e5270;font-weight:400;">My Portfolio pays my industry globally</div>
<svg style="position:absolute;left:1513.5px;top:441.5px" width="20" height="20" viewBox="0 0 20 20">
<rect x="0" y="0" width="20" height="20" rx="2.5" fill="#179ed3"/>
<path d="M4.2 9.8 L8.4 13.8 L16 5.6" fill="none" stroke="#fff" stroke-width="3.4"/>
</svg>
<div class="t " style="left:1545.30px;top:443.64px;font-size:18.50px;color:#6c55bc;font-weight:400;">My Portfolio pays my industry in my</div>
<div class="t " style="left:1545.30px;top:474.14px;font-size:18.50px;color:#6c55bc;font-weight:400;">country</div>
<div style="position:absolute;left:1715.00px;top:514.50px;width:21.00px;height:21.00px;background:#fff;border:1px solid #c6c9cc;border-radius:3px;box-sizing:border-box;"></div>
<div class="t " style="left:1747.00px;top:517.27px;font-size:18.70px;color:#374a50;font-weight:400;">Non-Portfolio</div>
<div style="position:absolute;left:1513.00px;top:558.50px;width:21.00px;height:21.00px;background:#fff;border:1px solid #c6c9cc;border-radius:3px;box-sizing:border-box;box-shadow:0 0 4px 1px rgba(60,170,220,0.6);"></div>
<div class="t " style="left:1545.30px;top:560.41px;font-size:18.30px;color:#c56d35;font-weight:400;">My Industry is being paid</div>
<div style="position:absolute;left:1513.00px;top:594.50px;width:21.00px;height:21.00px;background:#fff;border:1px solid #c6c9cc;border-radius:3px;box-sizing:border-box;"></div>
<div class="t " style="left:1545.30px;top:598.06px;font-size:18.35px;color:#2ab8c8;font-weight:400;">My country is being paid</div>
<div style="position:absolute;left:1513.00px;top:631.00px;width:21.00px;height:21.00px;background:#fff;border:1px solid #c6c9cc;border-radius:3px;box-sizing:border-box;"></div>
<div class="t " style="left:1545.30px;top:637.24px;font-size:17.90px;color:#d69bd8;font-weight:400;">Select Country</div>
<svg style="position:absolute;left:1666px;top:643.5px" width="14" height="8"><path d="M0.8 0.8 L12.4 0.8 L6.6 6.6 Z" fill="#d69bd8"/></svg>
<div class="t " style="left:1628.70px;top:668.47px;font-size:18.10px;color:#d69bd8;font-weight:400;">Select Industry</div>
<svg style="position:absolute;left:1753px;top:675px" width="14" height="8"><path d="M0.8 0.8 L12.4 0.8 L6.6 6.6 Z" fill="#d69bd8"/></svg>
<div class="t " style="left:1538.50px;top:698.19px;font-size:18.20px;color:#d69bd8;font-weight:400;">is being paid</div>
<div style="position:absolute;left:1513.00px;top:731.50px;width:21.00px;height:21.00px;background:#fff;border:1px solid #c6c9cc;border-radius:3px;box-sizing:border-box;"></div>
<div class="t " style="left:1545.30px;top:737.44px;font-size:17.90px;color:#1e6466;font-weight:400;">Select Country</div>
<svg style="position:absolute;left:1666px;top:744px" width="14" height="8"><path d="M0.8 0.8 L12.4 0.8 L6.6 6.6 Z" fill="#1e6466"/></svg>
<div class="t " style="left:1690.80px;top:735.19px;font-size:18.20px;color:#1e6466;font-weight:400;">is being paid</div>
<div class="t " style="left:1563.20px;top:775.36px;font-size:19.30px;color:#2a3d42;font-weight:400;">* See FAQ for details of this.</div>
<div style="position:absolute;left:275.00px;top:874.00px;width:1634.00px;height:1.00px;background:#dde3e6"></div>
<div class="t " style="left:917.50px;top:900.71px;font-size:15.40px;color:#7b8a90;font-weight:400;">&copy;</div>
<div class="t " style="left:932.00px;top:899.19px;font-size:17.20px;color:#1f5d7c;font-weight:400;letter-spacing:-0.2px">dun</div>
<svg style="position:absolute;left:0;top:0;overflow:visible" width="1" height="1">
<g transform="translate(960.3,894.4) scale(0.02444)">
<path d="M200 228 A148 148 0 1 1 418 440" fill="none" stroke="#2a6f8f" stroke-width="78"/>
<path d="M580 395 A175 175 0 0 1 640 690" fill="none" stroke="#2a6f8f" stroke-width="78"/>
<path d="M277 565 A180 180 0 1 0 530 752" fill="none" stroke="#1d5a78" stroke-width="82"/>
<path d="M160 265 L722 838 L662 892 L160 372 Z" fill="#1d5a78"/>
</g></svg>
<div class="t " style="left:982.80px;top:899.19px;font-size:17.20px;color:#5ba6c2;font-weight:400;letter-spacing:0.75px">bradstreet</div>
<div class="t " style="left:1070.40px;top:900.71px;font-size:15.40px;color:#7b8a90;font-weight:400;">Inc. 2019. All rights reserved</div>
<div class="t " style="left:991.70px;top:931.34px;font-size:14.95px;color:#2b9ac9;font-weight:400;">Privacy Policy</div>
<div class="t " style="left:1089.50px;top:930.96px;font-size:15.40px;color:#7b8a90;font-weight:400;">|</div>
<div class="t " style="left:1100.40px;top:930.92px;font-size:15.45px;color:#2b9ac9;font-weight:400;">Terms of Use</div>
</body></html>
